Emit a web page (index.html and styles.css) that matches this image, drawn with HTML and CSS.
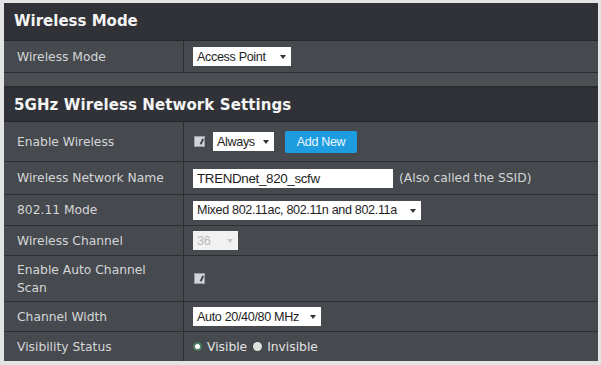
FILE: index.html
```html
<!DOCTYPE html>
<html>
<head lang="en">
    <meta charset="UTF-8">
    <title>Wireless Settings</title>
    <link rel="stylesheet" href="styles.css">
</head>
<body>
<div class="page">
    <div class="section">
        <h2 class="sec-title">Wireless Mode</h2>
        <div class="row">
            <div class="label">Wireless Mode</div>
            <div class="field">
                <span class="select w-ap">Access Point <i class="caret"></i></span>
            </div>
        </div>
    </div>
    <div class="spacer"></div>
    <div class="section">
        <h2 class="sec-title big">5GHz Wireless Network Settings</h2>
        <div class="row r-enable">
            <div class="label">Enable Wireless</div>
            <div class="field">
                <span class="check"></span>
                <span class="select w-always">Always <i class="caret"></i></span>
                <span class="btn">Add New</span>
            </div>
        </div>
        <div class="row r-name">
            <div class="label">Wireless Network Name</div>
            <div class="field">
                <span class="input">TRENDnet_820_scfw</span>
                <span class="note">(Also called the SSID)</span>
            </div>
        </div>
        <div class="row r-mode">
            <div class="label">802.11 Mode</div>
            <div class="field">
                <span class="select w-mode">Mixed 802.11ac, 802.11n and 802.11a <i class="caret"></i></span>
            </div>
        </div>
        <div class="row r-chan">
            <div class="label">Wireless Channel</div>
            <div class="field">
                <span class="select w-chan disabled">36 <i class="caret"></i></span>
            </div>
        </div>
        <div class="row r-auto">
            <div class="label">Enable Auto Channel<br>Scan</div>
            <div class="field">
                <span class="check"></span>
            </div>
        </div>
        <div class="row r-width">
            <div class="label">Channel Width</div>
            <div class="field">
                <span class="select w-width">Auto 20/40/80 MHz <i class="caret"></i></span>
            </div>
        </div>
        <div class="row r-vis">
            <div class="label">Visibility Status</div>
            <div class="field">
                <span class="radio on"></span><span class="opt">Visible</span>
                <span class="radio"></span><span class="opt">Invisible</span>
            </div>
        </div>
    </div>
</div>
</body>
</html>
```

FILE: styles.css
```css
*{
    margin:0;
    padding:0;
    box-sizing: border-box;
}
html,body{
    background:#e4e4e4;
}
body{
    font-family: "DejaVu Sans", Verdana, sans-serif;
    color:#d4d6d8;
}
.page{
    margin:3px 3px 3px 4px;
    width:594px;
    background:#46494e;
}
.sec-title{
    height:38px;
    line-height:36px;
    padding-left:10px;
    font-size:15px;
    font-weight:700;
    color:#f4f4f4;
    background:#303237;
    border-bottom:1px solid #25272b;
}
.sec-title.big{
    height:34px;
    line-height:34px;
    letter-spacing:0.1px;
}
.spacer{
    height:16px;
    background:#4b4e53;
    border-top:1px solid #2a2c30;
    border-bottom:2px solid #2a2c30;
}
.row{
    display:flex;
    height:31px;
    border-bottom:1px solid #2c2e32;
    background:#46494e;
}
.row:last-child{
    border-bottom:none;
}
.label{
    width:180px;
    padding-left:13px;
    display:flex;
    align-items:center;
    font-size:12.3px;
    line-height:18px;
    border-right:1px solid #2c2e32;
}
.field{
    flex:1;
    display:flex;
    align-items:center;
    padding-left:9px;
}
.r-enable{height:40px;}
.r-name{height:33px;}
.r-mode{height:31px;}
.r-chan{height:30px;}
.r-auto{height:46px;}
.r-width{height:30px;}
.r-vis{height:29px;}

.select,.input{
    display:inline-flex;
    align-items:center;
    height:19px;
    padding-left:4px;
    background:#fff;
    color:#1e1e1e;
    font-family:"Liberation Sans", Arial, sans-serif;
    font-size:12.6px;
    letter-spacing:-0.35px;
    position:relative;
}
.caret{
    position:absolute;
    right:5px;
    top:8px;
    width:0;height:0;
    border-left:3px solid transparent;
    border-right:3px solid transparent;
    border-top:4px solid #333;
}
.w-ap{width:98px;}
.w-always{width:61px;margin-left:8px;}
.w-mode{width:228px;}
.w-chan{width:45px;}
.w-width{width:128px;}
.select.disabled{
    background:#f1f1f1;
    color:#b8b8b8;
}
.select.disabled .caret{
    border-top-color:#c4c4c4;
}
.input{
    width:200px;
    font-size:13.4px;
}
.note{
    margin-left:6px;
    font-size:12.3px;
    color:#d4d5d6;
}
.btn{
    margin-left:11px;
    height:22px;
    width:72px;
    display:inline-flex;
    align-items:center;
    justify-content:center;
    background:#1d9de0;
    color:#eaf6fd;
    font-family:"Liberation Sans", Arial, sans-serif;
    font-size:12.5px;
    letter-spacing:-0.3px;
    border-radius:2px;
}
.check{
    width:11px;
    height:11px;
    margin-left:1px;
    background:#d2d4d8;
    border:1px solid #9aa0a8;
    position:relative;
}
.check:after{
    content:'';
    position:absolute;
    left:3px;top:1px;
    width:3px;height:6px;
    border-right:2px solid #41454c;
    transform:rotate(25deg);
}
.radio{
    width:9px;
    height:9px;
    border-radius:50%;
    background:#dfe3e0;
    margin-left:0;
    position:relative;
}
.radio.on{
    background:#fff;
    border:2px solid #4f7d62;
}
.opt{
    margin-left:5px;
    margin-right:6px;
    font-size:12.3px;
    color:#e2e3e4;
}
```
